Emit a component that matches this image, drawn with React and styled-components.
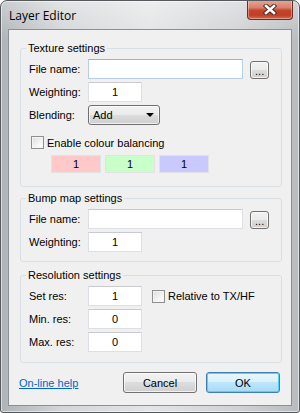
import React from "react";
import styled, { createGlobalStyle } from "styled-components";

const GlobalStyle = createGlobalStyle`
    html, body {
        margin: 0;
        padding: 0;
        background: #ffffff;
    }
    body {
        font-family: "Liberation Sans", Arial, sans-serif;
        font-size: 11px;
        color: #000;
    }
`;

const Window = styled.div`
    box-sizing: border-box;
    width: 300px;
    height: 413px;
    display: flex;
    flex-direction: column;
    border: 1px solid #55595e;
    border-radius: 7px 7px 3px 3px;
    overflow: hidden;
    background:
        linear-gradient(to bottom, rgba(255,255,255,0.35), rgba(255,255,255,0) 40px),
        linear-gradient(to right, #aeb3b8 0%, #d3d5d7 20%, #e3e4e5 50%, #cfd1d3 80%, #b9bcbf 100%);
    box-shadow: inset 0 0 0 1px rgba(255,255,255,0.55);
`;

const TitleBar = styled.div`
    height: 28px;
    flex-shrink: 0;
    display: flex;
    align-items: flex-start;
    justify-content: space-between;
    padding-left: 8px;
`;

const Title = styled.span`
    margin-top: 7px;
    font-family: "Open Sans", "Noto Sans", sans-serif;
    font-size: 12px;
    line-height: 16px;
    color: #000;
`;

const CloseButton = styled.div`
    box-sizing: border-box;
    width: 46px;
    height: 20px;
    margin-right: 6px;
    margin-top: -1px;
    display: flex;
    align-items: center;
    justify-content: center;
    border: 1px solid #6b2d24;
    border-top: none;
    border-radius: 0 0 4px 4px;
    background: linear-gradient(to bottom, #e9a899 0%, #d8806d 40%, #c7432b 55%, #bf3e28 80%, #d66b53 100%);
    box-shadow: inset 0 0 0 1px rgba(255,255,255,0.35);
`;

const Client = styled.div`
    flex: 1;
    margin: 0 7px 6px 7px;
    border: 1px solid #8a9096;
    background: #f0f0f0;
    padding: 12px 9px 0 11px;
    display: flex;
    flex-direction: column;
`;

const Group = styled.fieldset`
    margin: ${p => p.$mt || 0}px 0 0 0;
    padding: 4px 12px ${p => p.$pb || 9}px 8px;
    border: 1px solid #d5dfe5;
    border-radius: 3px;
    min-width: 0;
`;

const Legend = styled.legend`
    padding: 0 2px;
    margin-left: -3px;
    font-size: 11px;
    line-height: 13px;
`;

const Row = styled.div`
    display: flex;
    align-items: center;
    height: ${p => p.$h || 20}px;
    margin-top: ${p => (p.$mt === undefined ? 3 : p.$mt)}px;
    padding-left: ${p => p.$pl || 0}px;
    gap: ${p => p.$gap || 0}px;
`;

const Label = styled.span`
    width: 59px;
    flex-shrink: 0;
    white-space: nowrap;
`;

const TextBox = styled.input`
    box-sizing: border-box;
    width: ${p => p.$w}px;
    height: 20px;
    margin: 0;
    padding: 0 3px;
    border: 1px solid ${p => (p.$hot ? "#b5cfe9" : "#dcdfe3")};
    border-top-color: ${p => (p.$hot ? "#8fb5dc" : "#c9cbd0")};
    background: #ffffff;
    font: inherit;
    text-align: ${p => (p.$center ? "center" : "left")};
    color: #000;
    outline: none;
`;

const BrowseButton = styled.div`
    box-sizing: border-box;
    width: 19px;
    height: 18px;
    margin-left: 7px;
    align-self: flex-end;
    display: flex;
    align-items: flex-end;
    justify-content: center;
    padding-bottom: 3px;
    border: 1px solid #707070;
    border-radius: 3px;
    background: linear-gradient(to bottom, #f2f2f2 0%, #ebebeb 50%, #dddddd 50%, #cfcfcf 100%);
    box-shadow: inset 0 0 0 1px rgba(255,255,255,0.7);
    font-size: 11px;
    line-height: 8px;
`;

const Combo = styled.div`
    box-sizing: border-box;
    width: 72px;
    height: 20px;
    display: flex;
    align-items: center;
    justify-content: space-between;
    padding: 0 5px 0 4px;
    border: 1px solid #707070;
    border-radius: 3px;
    background: linear-gradient(to bottom, #f2f2f2 0%, #ebebeb 50%, #dddddd 50%, #cfcfcf 100%);
    box-shadow: inset 0 0 0 1px rgba(255,255,255,0.7);
`;

const Arrow = styled.span`
    width: 0;
    height: 0;
    border-left: 4px solid transparent;
    border-right: 4px solid transparent;
    border-top: 4px solid #000;
`;

const CheckBox = styled.span`
    box-sizing: border-box;
    width: 13px;
    height: 13px;
    flex-shrink: 0;
    margin-left: ${p => p.$ml || 0}px;
    border: 1px solid #8e8f8f;
    background: linear-gradient(135deg, #dcdcdc 0%, #f4f4f4 60%, #ffffff 100%);
    box-shadow: inset 0 0 0 1px #f4f4f4;
`;

const CheckText = styled.span`
    margin-left: 3px;
    white-space: nowrap;
`;

const Swatch = styled.div`
    box-sizing: border-box;
    width: 50px;
    height: 18px;
    display: flex;
    align-items: center;
    justify-content: center;
    border: 1px solid #e2e2e2;
    background: ${p => p.$bg};
`;

const Footer = styled.div`
    display: flex;
    align-items: center;
    margin-top: 9px;
    margin-right: 2px;
`;

const HelpLink = styled.a`
    margin-left: -1px;
    color: #0066cc;
    text-decoration: underline;
    cursor: pointer;
`;

const DialogButton = styled.button`
    box-sizing: border-box;
    width: 74px;
    height: 21px;
    margin: 0 0 0 ${p => p.$ml || 0};
    padding: 0;
    font: inherit;
    color: #000;
    border: 1px solid ${p => (p.$default ? "#3c7fb1" : "#707070")};
    border-radius: 3px;
    background: ${p =>
        p.$default
            ? "linear-gradient(to bottom, #eaf6fd 0%, #d9f0fc 50%, #bee6fd 50%, #a7d9f5 100%)"
            : "linear-gradient(to bottom, #f2f2f2 0%, #ebebeb 50%, #dddddd 50%, #cfcfcf 100%)"};
    box-shadow: inset 0 0 0 1px ${p => (p.$default ? "#48d8fb" : "rgba(255,255,255,0.7)")};
`;

const CloseIcon = () => (
    <svg width="14" height="11" viewBox="0 0 14 11">
        <path d="M3 2 L11 9 M11 2 L3 9" stroke="#4a2a25" strokeWidth="4.4" strokeLinecap="square" />
        <path d="M3 2 L11 9 M11 2 L3 9" stroke="#ffffff" strokeWidth="2.6" strokeLinecap="square" />
    </svg>
);

const App = () => {
    return (
        <>
            <GlobalStyle />
            <Window>
                <TitleBar>
                    <Title>Layer Editor</Title>
                    <CloseButton>
                        <CloseIcon />
                    </CloseButton>
                </TitleBar>
                <Client>
                    <Group $pb={13}>
                        <Legend>Texture settings</Legend>
                        <Row $mt={0}>
                            <Label>File name:</Label>
                            <TextBox $w={157} $hot readOnly value="" />
                            <BrowseButton>...</BrowseButton>
                        </Row>
                        <Row>
                            <Label>Weighting:</Label>
                            <TextBox $w={54} $center readOnly value="1" />
                        </Row>
                        <Row>
                            <Label>Blending:</Label>
                            <Combo>
                                <span>Add</span>
                                <Arrow />
                            </Combo>
                        </Row>
                        <Row $h={13} $mt={11} $pl={2}>
                            <CheckBox />
                            <CheckText>Enable colour balancing</CheckText>
                        </Row>
                        <Row $h={18} $mt={6} $pl={22} $gap={4}>
                            <Swatch $bg="#ffc9c9">1</Swatch>
                            <Swatch $bg="#c9ffc9">1</Swatch>
                            <Swatch $bg="#c9c9ff">1</Swatch>
                        </Row>
                    </Group>

                    <Group $mt={5}>
                        <Legend>Bump map settings</Legend>
                        <Row $mt={0}>
                            <Label>File name:</Label>
                            <TextBox $w={157} readOnly value="" />
                            <BrowseButton>...</BrowseButton>
                        </Row>
                        <Row>
                            <Label>Weighting:</Label>
                            <TextBox $w={54} $center readOnly value="1" />
                        </Row>
                    </Group>

                    <Group $mt={7} $pb={10}>
                        <Legend>Resolution settings</Legend>
                        <Row $mt={0}>
                            <Label>Set res:</Label>
                            <TextBox $w={54} $center readOnly value="1" />
                            <CheckBox $ml={10} />
                            <CheckText>Relative to TX/HF</CheckText>
                        </Row>
                        <Row>
                            <Label>Min. res:</Label>
                            <TextBox $w={54} $center readOnly value="0" />
                        </Row>
                        <Row>
                            <Label>Max. res:</Label>
                            <TextBox $w={54} $center readOnly value="0" />
                        </Row>
                    </Group>

                    <Footer>
                        <HelpLink>On-line help</HelpLink>
                        <DialogButton $ml="auto">Cancel</DialogButton>
                        <DialogButton $ml="9px" $default>OK</DialogButton>
                    </Footer>
                </Client>
            </Window>
        </>
    );
};

export default App;
